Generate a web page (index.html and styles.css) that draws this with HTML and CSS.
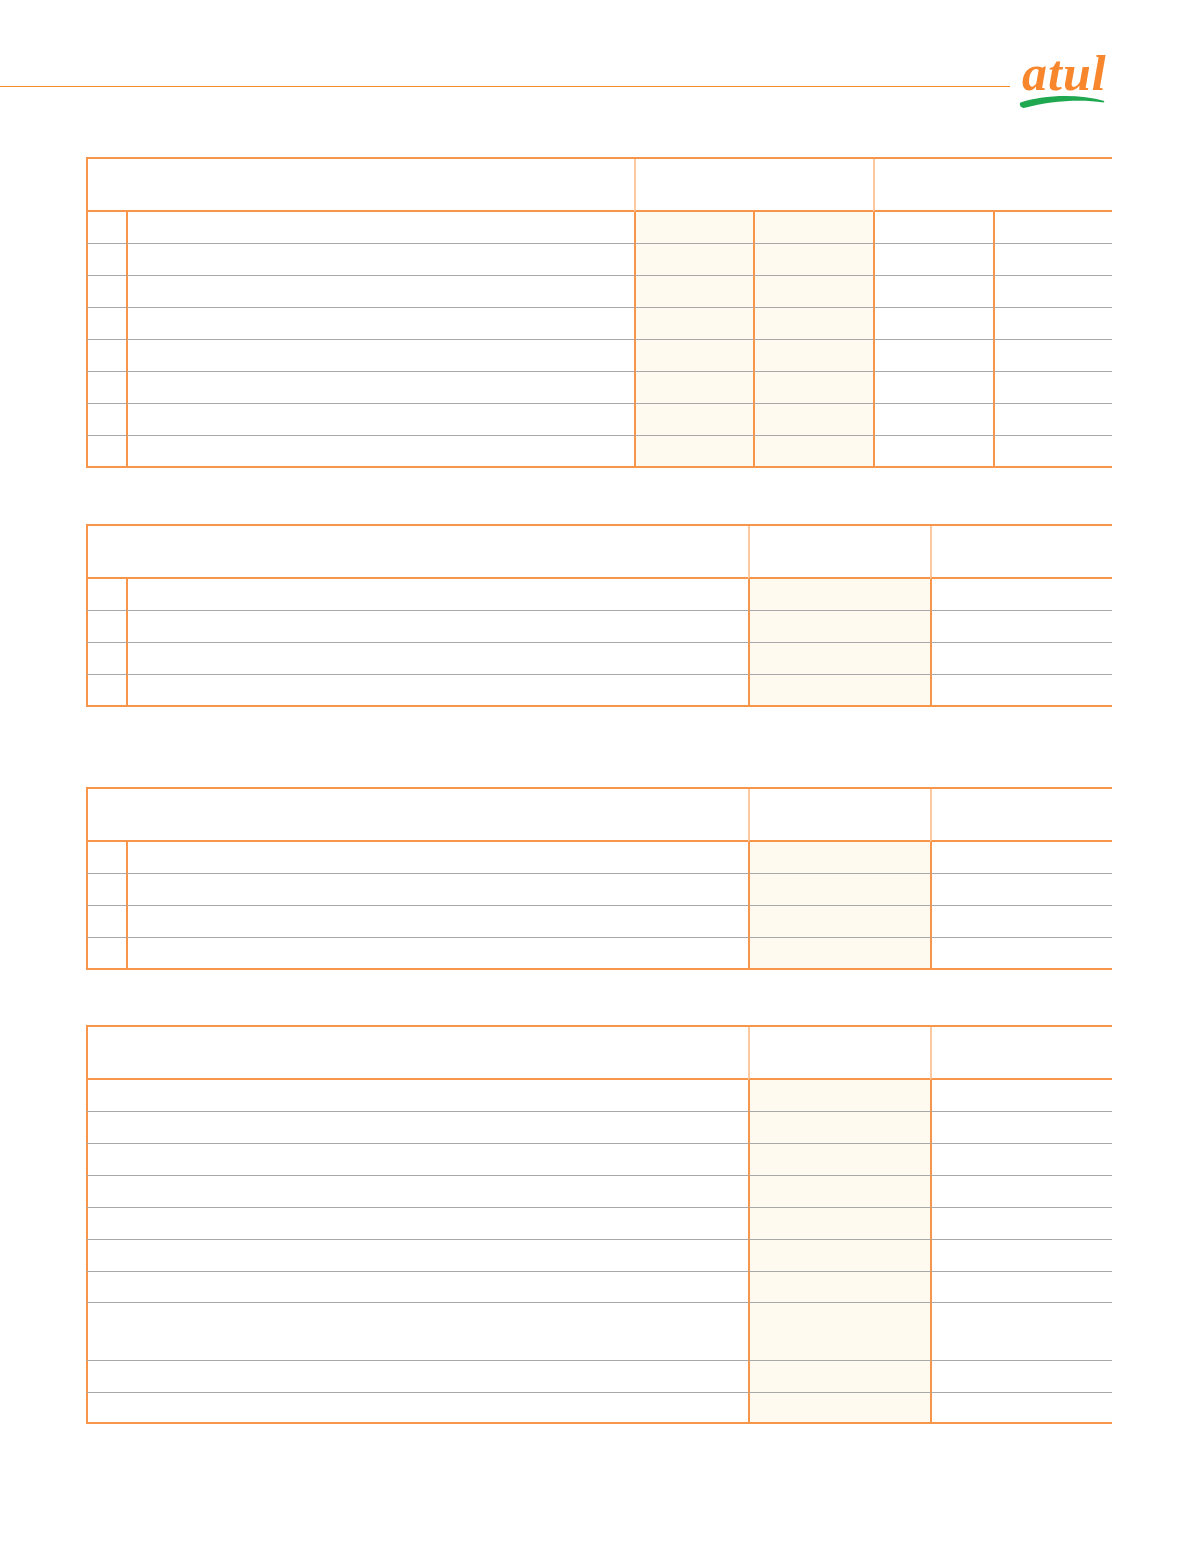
FILE: index.html
```html
<!DOCTYPE html>
<html lang="en">
<head>
<meta charset="utf-8">
<title>Atul</title>
<link rel="stylesheet" href="styles.css">
</head>
<body>
<header class="masthead">
  <div class="rule"></div>
  <div class="logo">
    <span class="logo-word">atul</span>
    <svg class="swoosh" viewBox="0 0 86 15" width="86" height="15" aria-hidden="true">
      <path d="M1.5 8.5 C22 1.5 58 -1 85.5 7 L84.5 8.6 C60 4.8 30 7.5 6 13.8 C2 14.8 -0.5 10.5 1.5 8.5 Z" fill="#1fa84f"/>
    </svg>
  </div>
</header>

<main class="tables">
  <div class="tbl t1">
    <div class="hd span2"></div><div class="hd span2 hl"></div><div class="hd span2 hl"></div>
    <div class="c"></div><div class="c"></div><div class="c f"></div><div class="c f"></div><div class="c"></div><div class="c"></div>
    <div class="c"></div><div class="c"></div><div class="c f"></div><div class="c f"></div><div class="c"></div><div class="c"></div>
    <div class="c"></div><div class="c"></div><div class="c f"></div><div class="c f"></div><div class="c"></div><div class="c"></div>
    <div class="c"></div><div class="c"></div><div class="c f"></div><div class="c f"></div><div class="c"></div><div class="c"></div>
    <div class="c"></div><div class="c"></div><div class="c f"></div><div class="c f"></div><div class="c"></div><div class="c"></div>
    <div class="c"></div><div class="c"></div><div class="c f"></div><div class="c f"></div><div class="c"></div><div class="c"></div>
    <div class="c"></div><div class="c"></div><div class="c f"></div><div class="c f"></div><div class="c"></div><div class="c"></div>
    <div class="c l"></div><div class="c l"></div><div class="c f l"></div><div class="c f l"></div><div class="c l"></div><div class="c l"></div>
  </div>

  <div class="tbl t2">
    <div class="hd span2"></div><div class="hd hl"></div><div class="hd hl"></div>
    <div class="c"></div><div class="c"></div><div class="c f"></div><div class="c"></div>
    <div class="c"></div><div class="c"></div><div class="c f"></div><div class="c"></div>
    <div class="c"></div><div class="c"></div><div class="c f"></div><div class="c"></div>
    <div class="c l"></div><div class="c l"></div><div class="c f l"></div><div class="c l"></div>
  </div>

  <div class="tbl t2 t3">
    <div class="hd span2"></div><div class="hd hl"></div><div class="hd hl"></div>
    <div class="c"></div><div class="c"></div><div class="c f"></div><div class="c"></div>
    <div class="c"></div><div class="c"></div><div class="c f"></div><div class="c"></div>
    <div class="c"></div><div class="c"></div><div class="c f"></div><div class="c"></div>
    <div class="c l"></div><div class="c l"></div><div class="c f l"></div><div class="c l"></div>
  </div>

  <div class="tbl t4">
    <div class="hd"></div><div class="hd hl"></div><div class="hd hl"></div>
    <div class="c"></div><div class="c f"></div><div class="c"></div>
    <div class="c"></div><div class="c f"></div><div class="c"></div>
    <div class="c"></div><div class="c f"></div><div class="c"></div>
    <div class="c"></div><div class="c f"></div><div class="c"></div>
    <div class="c"></div><div class="c f"></div><div class="c"></div>
    <div class="c"></div><div class="c f"></div><div class="c"></div>
    <div class="c short"></div><div class="c f short"></div><div class="c short"></div>
    <div class="c tall"></div><div class="c f tall"></div><div class="c tall"></div>
    <div class="c"></div><div class="c f"></div><div class="c"></div>
    <div class="c l short"></div><div class="c f l short"></div><div class="c l short"></div>
  </div>
</main>
</body>
</html>
```

FILE: styles.css
```css
html, body {
  margin: 0;
  padding: 0;
  background: #ffffff;
  font-family: "Liberation Sans", Arial, sans-serif;
}

.masthead {
  display: flex;
  align-items: flex-start;
  height: 157px;
}

.rule {
  flex: 0 0 1010px;
  margin-top: 86px;
  border-top: 1px solid #f58a2e;
}

.logo {
  margin-left: 9px;
  margin-top: 48px;
  width: 90px;
  display: flex;
  flex-direction: column;
  align-items: flex-start;
}

.logo-word {
  font-family: "Liberation Serif", "Times New Roman", serif;
  font-style: italic;
  font-weight: bold;
  font-size: 50px;
  line-height: 50px;
  color: #f7862c;
  letter-spacing: 1px;
  padding-left: 3px;
}

.swoosh {
  display: block;
  margin-top: -4px;
}

.tables {
  padding-left: 86px;
  display: flex;
  flex-direction: column;
}

.tbl {
  display: grid;
  width: 1026px;
  border-top: 2px solid #f7964b;
}

.t1 {
  grid-template-columns: 40px 508px 119px 120px 120px 119px;
}

.t2 {
  grid-template-columns: 40px 622px 182px 182px;
  margin-top: 56px;
}

.t3 {
  margin-top: 80px;
}

.t4 {
  grid-template-columns: 662px 182px 182px;
  margin-top: 55px;
}

.hd {
  box-sizing: border-box;
  height: 53px;
  border-bottom: 2px solid #f7964b;
  border-left: 2px solid #f7964b;
}

.hd.hl {
  border-left-color: #fcc8a0;
}

.span2 {
  grid-column: span 2;
}

.c {
  box-sizing: border-box;
  height: 32px;
  border-left: 2px solid #f7964b;
  border-bottom: 1px solid #a8a8a8;
}

.c.f {
  background: #fefaef;
}

.c.l {
  border-bottom: 2px solid #f7964b;
}

.c.short {
  height: 31px;
}

.c.tall {
  height: 58px;
}
```
